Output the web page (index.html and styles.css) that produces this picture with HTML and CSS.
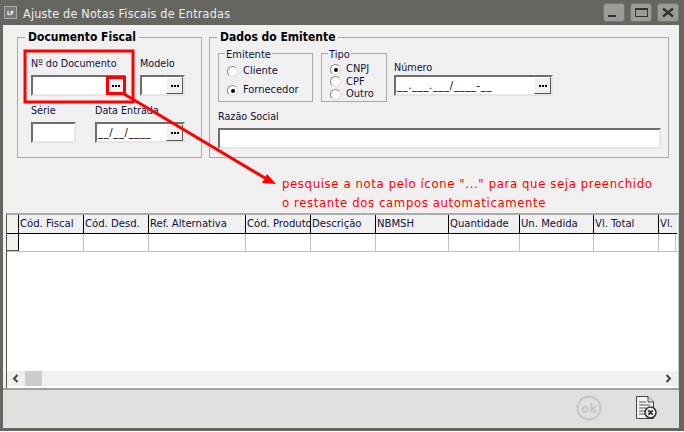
FILE: index.html
```html
<!DOCTYPE html>
<html lang="pt">
<head>
<meta charset="utf-8">
<title>Ajuste de Notas Fiscais de Entradas</title>
<link rel="stylesheet" href="styles.css">
</head>
<body>
<div class="window">
  <header class="titlebar">
    <span class="logo">LF</span>
    <h1 class="title">Ajuste de Notas Fiscais de Entradas</h1>
    <div class="winbtns">
      <span class="winbtn"><svg width="20" height="18" viewBox="0 0 20 18"><rect x="4" y="11" width="8" height="2" fill="#333"/></svg></span>
      <span class="winbtn"><svg width="20" height="18" viewBox="0 0 20 18"><rect x="4.500" y="4.500" width="12" height="8" fill="none" stroke="#333"/><rect x="4" y="4" width="13" height="2" fill="#333"/></svg></span>
      <span class="winbtn"><svg width="20" height="18" viewBox="0 0 20 18"><path d="M5 4.500l10 8M15 4.500L5 12.500" stroke="#333" stroke-width="2.400" fill="none"/></svg></span>
    </div>
  </header>
  <main class="body">
    <section class="top">
      <div class="group doc">
        <h2 class="legend">Documento Fiscal</h2>
        <div class="field f-num"><label>Nº do Documento</label><div class="input"><i class="dots"></i></div></div>
        <div class="field f-mod"><label>Modelo</label><div class="input"><i class="dots"></i></div></div>
        <div class="field f-ser"><label>Série</label><div class="input"></div></div>
        <div class="field f-dat"><label>Data Entrada</label><div class="input"><span class="mask">__/__/____</span><i class="dots"></i></div></div>
      </div>
      <div class="group emit">
        <h2 class="legend">Dados do Emitente</h2>
        <div class="emit-row">
          <div class="sub sub-e">
            <span class="sublegend">Emitente</span>
            <div class="radio"><b></b>Cliente</div>
            <div class="radio on"><b></b>Fornecedor</div>
          </div>
          <div class="sub sub-t">
            <span class="sublegend">Tipo</span>
            <div class="radio on"><b></b>CNPJ</div>
            <div class="radio"><b></b>CPF</div>
            <div class="radio"><b></b>Outro</div>
          </div>
          <div class="field f-cnpj"><label>Número</label><div class="input"><span class="mask">__.___.___/____-__</span><i class="dots"></i></div></div>
        </div>
        <div class="field f-raz"><label>Razão Social</label><div class="input"></div></div>
      </div>
    </section>
    <section class="note">
      <p>pesquise a nota pelo ícone "..." para que seja preenchido</p>
      <p>o restante dos campos automaticamente</p>
    </section>
    <section class="grid">
      <div class="row head">
        <span class="ind"></span>
        <span class="c c1">Cód. Fiscal</span><span class="c c2">Cód. Desd.</span><span class="c c3">Ref. Alternativa</span><span class="c c4">Cód. Produto</span><span class="c c5">Descrição</span><span class="c c6">NBMSH</span><span class="c c7">Quantidade</span><span class="c c8">Un. Medida</span><span class="c c9">Vl. Total</span><span class="c c10">Vl.</span>
      </div>
      <div class="row cells">
        <span class="ind"></span>
        <span class="c c1"></span><span class="c c2"></span><span class="c c3"></span><span class="c c4"></span><span class="c c5"></span><span class="c c6"></span><span class="c c7"></span><span class="c c8"></span><span class="c c9"></span><span class="c c10"></span>
      </div>
      <div class="grid-empty"></div>
      <div class="hscroll">
        <svg class="arrow" width="7" height="9" viewBox="0 0 7 9"><path d="M5.500 1L2 4.500 5.500 8" fill="none" stroke="#444" stroke-width="2"/></svg>
        <span class="thumb"></span>
        <svg class="arrow end" width="7" height="9" viewBox="0 0 7 9"><path d="M1.500 1L5 4.500 1.500 8" fill="none" stroke="#444" stroke-width="2"/></svg>
      </div>
    </section>
  </main>
  <footer class="footer">
    <svg class="btn-ok" width="28" height="28" viewBox="0 0 28 28"><circle cx="14" cy="14" r="11.500" fill="none" stroke="#c6c6c6" stroke-width="2"/><text x="14" y="18.500" text-anchor="middle" class="ok-text">ok</text></svg>
    <svg class="btn-cancel" width="26" height="26" viewBox="0 0 26 26">
      <path d="M3.500 1.500H15L20.500 7V23.500H3.500Z" fill="#f4f4f4" stroke="#444"/>
      <path d="M15 1.500V7H20.500" fill="#ddd" stroke="#444"/>
      <path d="M6 7H13M6 10H17M6 13H13M6 16H12M6 19H12" stroke="#555"/>
      <circle cx="17.500" cy="17.500" r="5.500" fill="#eee" stroke="#333" stroke-width="1.500"/>
      <path d="M15.300 15.300l4.400 4.400M19.700 15.300l-4.400 4.400" stroke="#333" stroke-width="1.800"/>
    </svg>
  </footer>
</div>
<svg class="annot" width="684" height="432" viewBox="0 0 684 432">
  <rect x="25" y="51" width="108" height="51" fill="none" stroke="#f00" stroke-width="3"/>
  <rect x="107.500" y="77.500" width="17" height="16" fill="none" stroke="#f00" stroke-width="3"/>
  <path d="M124 94L265 178" stroke="#f00" stroke-width="3" fill="none"/>
  <path d="M276 184L262 183 267 174Z" fill="#f00"/>
</svg>
</body>
</html>
```

FILE: styles.css
```css
* { box-sizing: border-box; }
html, body { margin: 0; padding: 0; }
body {
  width: 684px;
  height: 432px;
  background: #fff;
  overflow: hidden;
  position: relative;
  font-family: "DejaVu Sans Condensed", "DejaVu Sans", sans-serif;
  font-stretch: condensed;
  font-size: 11px;
  color: #10103a;
}
.window {
  width: 684px;
  height: 431px;
  background: #666660;
  padding: 0 5px 3px 3px;
  display: flex;
  flex-direction: column;
}
.titlebar {
  height: 25px;
  display: flex;
  align-items: center;
  flex: none;
}
.logo {
  width: 13px;
  height: 13px;
  margin-left: 1px;
  background: #777;
  border: 1px solid #aaa;
  color: #fff;
  font-size: 6px;
  font-weight: 700;
  line-height: 11px;
  text-align: center;
}
.title {
  margin: 2px 0 0 6px;
  font-size: 12.500px;
  font-weight: 400;
  color: #eee;
  letter-spacing: 0.200px;
}
.winbtns {
  margin-left: auto;
  display: flex;
  gap: 5px;
}
.winbtn {
  width: 22px;
  height: 19px;
  background: #9b9b97;
  border: 1px solid #77776f;
  border-radius: 3px;
  display: flex;
  align-items: center;
  justify-content: center;
}
.body {
  height: 363px;
  flex: none;
  background: #f0f0f0;
  display: flex;
  flex-direction: column;
}
.top {
  height: 133px;
  padding: 12px 0 0 14px;
  display: flex;
  gap: 7px;
  flex: none;
}
.group {
  position: relative;
  height: 121px;
  border: 1px solid #a8a8a8;
}
.legend {
  position: absolute;
  top: -8px;
  left: 7px;
  margin: 0;
  padding: 0 3px;
  background: #f0f0f0;
  font-size: 12px;
  line-height: 15px;
  font-weight: 700;
  color: #000;
}
.doc {
  width: 185px;
  display: grid;
  grid-template-columns: 95px 45px;
  grid-template-rows: 47px 44px;
  column-gap: 14px;
  padding: 19px 0 0 13px;
}
.field label {
  display: block;
  height: 18px;
  line-height: 14px;
  font-size: 10.700px;
  white-space: nowrap;
}
.input {
  height: 21px;
  background: #fff;
  border: 2px solid;
  border-color: #6e6e6e #e6e6e6 #e6e6e6 #6e6e6e;
  position: relative;
  display: flex;
  align-items: center;
}
.dots {
  position: absolute;
  right: 0;
  top: 0;
  width: 17px;
  height: 17px;
  border: 1px solid;
  border-color: #fff #555 #555 #fff;
  background: #f0f0f0 repeating-linear-gradient(90deg, #000 0 2px, transparent 2px 3px) center / 8px 2px no-repeat;
}
.mask {
  padding-left: 1px;
  color: #000;
  letter-spacing: 0.700px;
  white-space: nowrap;
}
.f-ser, .f-mod { width: 45px; }
.f-dat { margin-left: -45px; width: 90px; }
.emit {
  width: 460px;
  padding: 15px 0 0 8px;
}
.emit-row {
  display: flex;
  height: 49px;
  gap: 8px;
}
.sub {
  position: relative;
  height: 49px;
  border: 1px solid #a8a8a8;
  display: flex;
  flex-direction: column;
}
.sub-e { width: 95px; padding: 11px 0 0 8px; gap: 7px; }
.sub-t { width: 66px; padding: 9px 0 0 8px; gap: 0.500px; }
.sublegend {
  position: absolute;
  top: -6px;
  left: 6px;
  padding: 0 1px;
  background: #f0f0f0;
  line-height: 13px;
}
.radio {
  display: flex;
  align-items: center;
  gap: 5px;
  height: 12px;
  line-height: 12px;
  white-space: nowrap;
}
.radio b {
  width: 11px;
  height: 11px;
  border-radius: 50%;
  background: #fff;
  border: 1px solid;
  border-color: #888 #ddd #ddd #888;
  flex: none;
  position: relative;
}
.radio.on b::after {
  content: "";
  position: absolute;
  left: 3px;
  top: 3px;
  width: 4px;
  height: 4px;
  border-radius: 50%;
  background: #000;
}
.f-cnpj { width: 159px; margin: 8px 0 0 -1px; }
.f-cnpj label { height: 14px; }
.f-raz { margin-top: 8px; width: 443px; }
.f-raz label { height: 18px; }
.note {
  height: 55px;
  padding: 16px 0 0 279px;
  color: #f00;
  font-size: 13px;
  letter-spacing: 0.620px;
  flex: none;
}
.note p { margin: 0; line-height: 19px; white-space: nowrap; }
.grid {
  height: 175px;
  margin: 0 0 0 3px;
  background: #fff;
  display: flex;
  flex-direction: column;
  border-top: 2px solid #aaa;
  border-left: 1px solid #555;
  border-right: 1px solid #c8c8c8;
  padding-bottom: 2px;
}
.row { display: flex; flex: none; }
.head { height: 19px; background: #f0f0f0; border-bottom: 1px solid #000; width: 670px; }
.cells { height: 18px; border-bottom: 1px solid #c0c0c0; }
.ind {
  width: 12px;
  flex: none;
  background: #f0f0f0;
  border-right: 1px solid #000;
  border-bottom: 1px solid #555;
}
.head .ind { border-bottom: 0; }
.c {
  overflow: hidden;
  white-space: nowrap;
  padding-left: 1px;
  line-height: 18px;
  flex: none;
  font-size: 11.200px;
}
.head .c { border-right: 1px solid #000; }
.head .c10 { border-right: 0; }
.cells .c { border-right: 1px solid #c0c0c0; }
.c1, .c2, .c4, .c5, .c9 { width: 65px; }
.c3 { width: 97px; }
.c6 { width: 73px; }
.c7 { width: 71px; }
.c8 { width: 74px; }
.c10 { width: 17px; }
.grid-empty { flex: 1; }
.hscroll {
  height: 15px;
  background: #f0f0f0;
  display: flex;
  align-items: center;
  padding: 0 6px 0 5px;
  flex: none;
}
.thumb { width: 17px; height: 15px; background: #cdcdcd; margin-left: 6px; }
.arrow.end { margin-left: auto; }
.footer {
  flex: 1;
  background: #e0e0e0;
  border-top: 2px solid #a0a0a0;
  display: flex;
  align-items: center;
  justify-content: flex-end;
  padding: 0 20px 2px 0;
  gap: 30px;
}
.ok-text { font-size: 13px; font-weight: 700; fill: #c6c6c6; font-family: "DejaVu Sans", sans-serif; }
.annot { position: absolute; left: 0; top: 0; pointer-events: none; }
```
